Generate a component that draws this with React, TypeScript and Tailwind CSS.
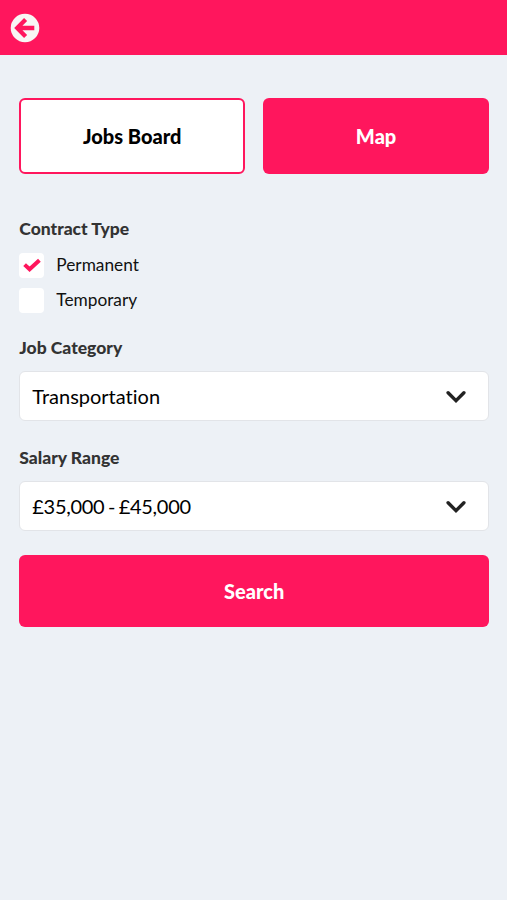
import React from "react";

interface ICheckOption {
  label: string;
  checked: boolean;
}

interface ISelectField {
  label: string;
  value: string;
  valueClass: string;
}

const BackIcon = () => (
  <svg viewBox="0 0 30 30" className="mt-0.5 h-[30px] w-[30px]">
    <circle cx="15" cy="15" r="14.3" fill="#f8f6f4" />
    <path
      d="M15.6 6.4 7.2 15l8.4 8.6M8.5 15h15.8"
      fill="none"
      stroke="#ff165d"
      strokeWidth="4.3"
    />
  </svg>
);

const CheckIcon = () => (
  <svg viewBox="0 0 18 14" className="h-[14px] w-[18px]">
    <path
      d="M1.6 6.6 6.6 11.2 16.4 2.2"
      fill="none"
      stroke="#ff165d"
      strokeWidth="4"
    />
  </svg>
);

const ChevronIcon = () => (
  <svg viewBox="0 0 20 14" className="mt-0.5 h-[14px] w-5">
    <path
      d="M2.1 2.8 10 10.6 17.9 2.8"
      fill="none"
      stroke="#222"
      strokeWidth="3.4"
      strokeLinecap="round"
    />
  </svg>
);

const CheckOption = ({ label, checked }: ICheckOption) => {
  return (
    <label className="flex h-[25px] items-center gap-3 text-[17.3px] text-[#111] hover:cursor-pointer">
      <span className="flex h-[25px] w-[25px] items-center justify-center rounded-[4px] bg-white">
        {checked && <CheckIcon />}
      </span>
      {label}
    </label>
  );
};

const SelectField = ({ label, value, valueClass }: ISelectField) => {
  return (
    <div>
      <h3 className="text-[17.5px] leading-6 font-black text-[#333]">{label}</h3>
      <button className="mt-[11px] flex h-[50px] w-full items-center justify-between rounded-md border border-[#e2e4e8] bg-white pr-[22px] pl-3 text-xl text-black">
        <span className={valueClass}>{value}</span>
        <ChevronIcon />
      </button>
    </div>
  );
};

const App = () => {
  return (
    <div className="min-h-screen bg-[#edf1f6] font-['Lato',sans-serif] [font-variant-ligatures:none]">
      <header className="flex h-[54.5px] items-center bg-[#ff165d] pl-[10px]">
        <BackIcon />
      </header>
      <main className="pt-[43px] pr-[18px] pl-[19.3px]">
        <div className="grid grid-cols-2 gap-[18px]">
          <button className="h-[76.5px] rounded-md border-2 border-[#ff165d] bg-white text-xl font-black text-black">
            Jobs Board
          </button>
          <button className="h-[76.5px] rounded-md bg-[#ff165d] text-xl font-black text-white">
            Map
          </button>
        </div>
        <h3 className="mt-[43px] text-[17.5px] leading-6 font-black text-[#333]">
          Contract Type
        </h3>
        <div className="mt-[11.5px] mb-[23px] flex flex-col gap-[10.2px]">
          <CheckOption label="Permanent" checked />
          <CheckOption label="Temporary" checked={false} />
        </div>
        <div className="flex flex-col gap-[25px]">
          <SelectField
            label="Job Category"
            value="Transportation"
            valueClass="tracking-normal"
          />
          <SelectField
            label="Salary Range"
            value="£35,000 - £45,000"
            valueClass="tracking-[-0.3px] [word-spacing:-1.2px]"
          />
        </div>
        <button className="mt-[24.8px] h-[72px] w-full rounded-md bg-[#ff165d] text-xl font-black text-white">
          Search
        </button>
      </main>
    </div>
  );
};

export default App;
